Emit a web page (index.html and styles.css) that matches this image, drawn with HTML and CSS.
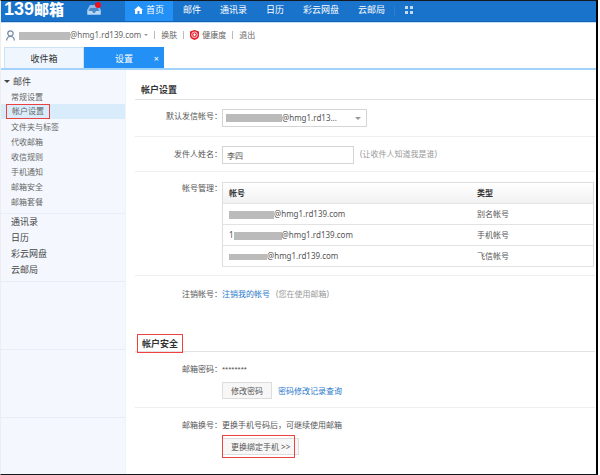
FILE: index.html
```html
<!DOCTYPE html>
<html lang="zh-CN">
<head>
<meta charset="utf-8">
<title>139邮箱</title>
<link rel="stylesheet" href="styles.css">
</head>
<body>
<div class="window">
  <header class="topbar">
    <a class="brand" href="#"><b>139</b>邮箱</a>
    <a class="inbox" href="#" aria-label="消息">
      <svg width="16" height="14" viewBox="0 0 16 14"><path d="M4 3h8l3 5v4a1 1 0 0 1-1 1H2a1 1 0 0 1-1-1V8z" fill="#8fbce8"/><path d="M4 6h8l1 3h-3l-1 2H7L6 9H3z" fill="#4a88c8"/><path d="M2 9h4l1 2h2l1-2h4v3H2z" fill="#b9d8f5"/><circle cx="12" cy="3" r="3" fill="#f00f1c"/></svg>
    </a>
    <nav class="nav">
      <a class="home" href="#"><svg width="9" height="8" viewBox="0 0 9 8"><path d="M4.500 0 9 4H8v4H5.500V5H3.500v3H1V4H0z" fill="#fff"/></svg>首页</a>
      <a href="#">邮件</a>
      <a href="#">通讯录</a>
      <a href="#">日历</a>
      <a href="#">彩云网盘</a>
      <a href="#">云邮局</a>
      <a class="apps" href="#" aria-label="更多"><svg width="8" height="8" viewBox="0 0 8 8"><path d="M0 0h3v3H0zM5 0h3v3H5zM0 5h3v3H0zM5 5h3v3H5z" fill="#c3dcf5"/></svg></a>
    </nav>
  </header>
  <div class="account">
    <svg width="9" height="11" viewBox="0 0 9 11"><circle cx="4.500" cy="3.500" r="2.700" fill="none" stroke="#6f87a3" stroke-width="1.200"/><path d="M.7 10.500c0-3 1.500-4 3.800-4s3.800 1 3.800 4" fill="none" stroke="#6f87a3" stroke-width="1.200"/></svg>
    <span class="mail"><i class="mask mask-top"></i>@hmg1.rd139.com</span>
    <i class="caret"></i>
    <i class="bar"></i>
    <a href="#">换肤</a>
    <i class="bar"></i>
    <a class="health" href="#"><svg width="9" height="10" viewBox="0 0 9 10"><path d="M4.500 0 9 1.500V6c0 2-2 3.300-4.500 4C2 9.300 0 8 0 6V1.500z" fill="#e8202a"/><circle cx="4.500" cy="4.800" r="2.800" fill="none" stroke="#fff" stroke-width=".8"/><path d="M4.500 3.300v3M3 4.800h3" stroke="#fff"/></svg>健康度</a>
    <i class="bar"></i>
    <a href="#">退出</a>
  </div>
  <div class="tabs">
    <a class="tab" href="#">收件箱</a>
    <a class="tab active" href="#">设置<span class="close">×</span></a>
  </div>
  <div class="body">
    <aside class="side">
      <a class="group" href="#"><i class="caret dark"></i>邮件</a>
      <ul class="items">
        <li><a href="#">常规设置</a></li>
        <li class="current"><a href="#">帐户设置</a></li>
        <li><a href="#">文件夹与标签</a></li>
        <li><a href="#">代收邮箱</a></li>
        <li><a href="#">收信规则</a></li>
        <li><a href="#">手机通知</a></li>
        <li><a href="#">邮箱安全</a></li>
        <li><a href="#">邮箱套餐</a></li>
      </ul>
      <ul class="apps-list">
        <li><a href="#">通讯录</a></li>
        <li><a href="#">日历</a></li>
        <li><a href="#">彩云网盘</a></li>
        <li><a href="#">云邮局</a></li>
      </ul>
      <div class="slot"></div>
      <div class="slot"></div>
    </aside>
    <main class="main">
      <h2><span>帐户设置</span></h2>
      <div class="row sender">
        <label class="label" for="from">默认发信帐号：</label>
        <div class="picker">
          <i class="mask mask-pick"></i>
          <select id="from"><option>@hmg1.rd13...</option></select>
          <i class="caret"></i>
        </div>
      </div>
      <div class="row name">
        <label class="label" for="name">发件人姓名：</label>
        <input id="name" type="text" value="李四">
        <span class="hint">(让收件人知道我是谁)</span>
      </div>
      <div class="row manage">
        <span class="label">帐号管理：</span>
        <table>
          <thead><tr><th>帐号</th><th>类型</th></tr></thead>
          <tbody>
            <tr><td class="mail"><i class="mask mask-a"></i>@hmg1.rd139.com</td><td>别名帐号</td></tr>
            <tr><td class="mail">1<i class="mask mask-b"></i>@hmg1.rd139.com</td><td>手机帐号</td></tr>
            <tr><td class="mail"><i class="mask mask-c"></i>@hmg1.rd139.com</td><td>飞信帐号</td></tr>
          </tbody>
        </table>
      </div>
      <div class="row cancel">
        <span class="label">注销帐号：</span>
        <a class="link" href="#">注销我的帐号</a>
        <span class="hint">(您在使用邮箱)</span>
      </div>
      <h2 class="second"><span class="boxed">帐户安全</span></h2>
      <div class="row secret">
        <span class="label">邮箱密码：</span>
        <div class="stack">
          <span class="stars">********</span>
          <div class="actions"><button type="button">修改密码</button><a class="link" href="#">密码修改记录查询</a></div>
        </div>
      </div>
      <div class="row phone">
        <span class="label">邮箱换号：</span>
        <div class="stack">
          <span>更换手机号码后，可继续使用邮箱</span>
          <div class="actions"><span class="marked"><button type="button">更换绑定手机 &gt;&gt;</button></span></div>
        </div>
      </div>
    </main>
  </div>
</div>
</body>
</html>
```
FILE: styles.css
```css
* { box-sizing: border-box; }
body {
  margin: 0;
  background: #fff;
  color: #555;
  font: 8px/12px "Noto Sans", "Noto Sans CJK SC", sans-serif;
}
a { color: inherit; text-decoration: none; }
i { display: inline-block; font-style: normal; }
svg { display: block; flex: none; }
ul { list-style: none; margin: 0; padding: 0; }
input, select, button { font: inherit; color: inherit; border-radius: 0; }

.window {
  display: flex;
  flex-direction: column;
  min-height: 100vh;
  margin-right: 2px;
  border: 1px solid #15181d;
  border-left-color: #eee;
  border-right: 2px solid #000;
}

.topbar {
  display: flex;
  align-items: center;
  height: 21px;
  background: #1a73cb;
  border-bottom: 1px solid #1263b5;
  color: #fff;
}
.brand {
  display: flex;
  align-items: center;
  width: 85px;
  height: 20px;
  padding: 0 0 4px 3px;
  font-size: 15px;
  font-weight: 900;
  line-height: 16px;
}
.brand b { font-family: "Liberation Sans", sans-serif; font-size: 18px; font-weight: 700; }
.inbox { width: 39px; padding-bottom: 4px; }
.nav { display: flex; height: 20px; font-size: 9px; line-height: 17px; }
.nav a { padding: 0 9px 0 10px; white-space: nowrap; }
.nav .home { display: flex; align-items: flex-start; gap: 3px; padding: 0 9px; background: #2290f5; }
.home svg { margin-top: 5px; }
.nav .apps { margin: 5px 0; padding: 0 8px 0 10px; border-left: 1px solid #2b7fd2; }

.account {
  display: flex;
  align-items: center;
  height: 25px;
  padding-left: 5px;
  border-top: 1px solid #c4def5;
  color: #666;
}
.mail { white-space: nowrap; }
.account .mail { margin-left: 4px; }
.mask { height: 8px; background: #bbb; vertical-align: middle; }
.mask-top { width: 51px; }
.mask-pick { width: 56px; }
.mask-a { width: 45px; }
.mask-b { width: 48px; }
.mask-c { width: 38px; height: 6px; }
.caret { border: 3px solid transparent; border-top-color: #999; border-bottom: 0; }
.caret.dark { border-top-color: #444; }
.account .caret { border-width: 2px; border-bottom: 0; margin-left: 3px; }
.bar { width: 1px; height: 8px; margin: 0 6px; background: #bbb; }
.health { display: flex; align-items: center; gap: 3px; }

.tabs {
  display: flex;
  height: 23px;
  padding-left: 3px;
  border-bottom: 2px solid #a3d3fa;
  font-size: 9px;
  text-align: center;
}
.tab { position: relative; width: 80px; border: 1px solid #cde2f6; border-bottom: 0; background: #eff6fd; color: #333; line-height: 21px; }
.tab.active { background: #2290f5; border-color: #2290f5; color: #fff; }
.close { position: absolute; right: 4px; top: 0; }

.body { display: flex; flex: 1; }
.side { width: 125px; flex: none; background: #f4f8fe; color: #444; padding-top: 5px; border-right: 1px solid #eef3f8; }
.group { display: flex; align-items: center; gap: 3px; height: 14px; padding-left: 3px; font-size: 9px; }
.group .caret { margin-bottom: 2px; }
.items { padding-bottom: 4px; color: #666; }
.items li { height: 15px; padding-left: 10px; line-height: 15px; }
.items .current { display: flex; padding-left: 5px; background: #d9ecfb; }
.current a { padding: 0 5px; border: 1px solid #e8413f; line-height: 12px; }
.apps-list { border-top: 1px solid #e9eff6; border-bottom: 1px solid #e6edf5; padding-bottom: 3px; font-size: 9px; }
.apps-list li { height: 16px; padding-left: 10px; line-height: 16px; }
.slot { height: 68px; border-bottom: 1px solid #e6edf5; }

.main { flex: 1; padding: 10px 1px 0 9px; }
h2 { display: flex; margin: 0; height: 20px; border-bottom: 1px solid #e2e2e2; color: #333; font-size: 9px; font-weight: 700; line-height: 20px; }
h2 span { padding: 0 6px; }
.second { margin-top: 20px; }
h2 .boxed { align-self: flex-end; margin: 0 0 -2px 2px; padding: 0 4px; border: 1px solid #f0413f; line-height: 17px; }
.row { display: flex; align-items: flex-start; border-bottom: 1px solid #eee; line-height: 12px; }
.label { width: 87px; flex: none; text-align: right; }
.hint { margin-left: 6px; color: #999; }
.link { color: #2878cc; }
.sender { height: 37px; padding-top: 9px; }
.sender .label { padding-top: 1px; }
.picker { display: flex; align-items: center; width: 145px; height: 18px; padding: 0 5px 0 3px; border: 1px solid #d5d5d5; }
.picker select { flex: 1; min-width: 0; padding: 0; border: 0; background: none; appearance: none; }
.name { height: 35px; padding-top: 9px; }
.name .label, .name .hint { padding-top: 2px; }
.name input { width: 132px; height: 18px; padding: 0 4px; border: 1px solid #d5d5d5; background: #fff; }
.manage { height: 104px; padding-top: 10px; }
table { flex: 1; margin-right: 1px; border-collapse: collapse; border: 1px solid #ddd; }
tr { height: 21px; border-bottom: 1px solid #e3e3e3; }
th, td { width: 33%; padding: 0 6px; text-align: left; }
th:first-child, td:first-child { width: 67%; }
th { color: #333; }
thead { background: linear-gradient(#fff, #f1f1f1); }
.cancel { border: 0; padding-top: 12px; height: 36px; }
.secret { height: 56px; padding-top: 11px; }
.stars { display: block; height: 12px; font-family: "Liberation Sans", sans-serif; line-height: 14px; }
.actions { display: flex; align-items: center; gap: 6px; margin-top: 7px; }
button { height: 17px; padding: 0 8px; border: 1px solid #ddd; background: #f7f7f7; line-height: 12px; }
.phone { border: 0; padding-top: 11px; }
.marked { position: relative; display: flex; }
.marked::after { content: ""; position: absolute; inset: -3px 4px -3px 0; border: 1px solid #f0413f; }
```
